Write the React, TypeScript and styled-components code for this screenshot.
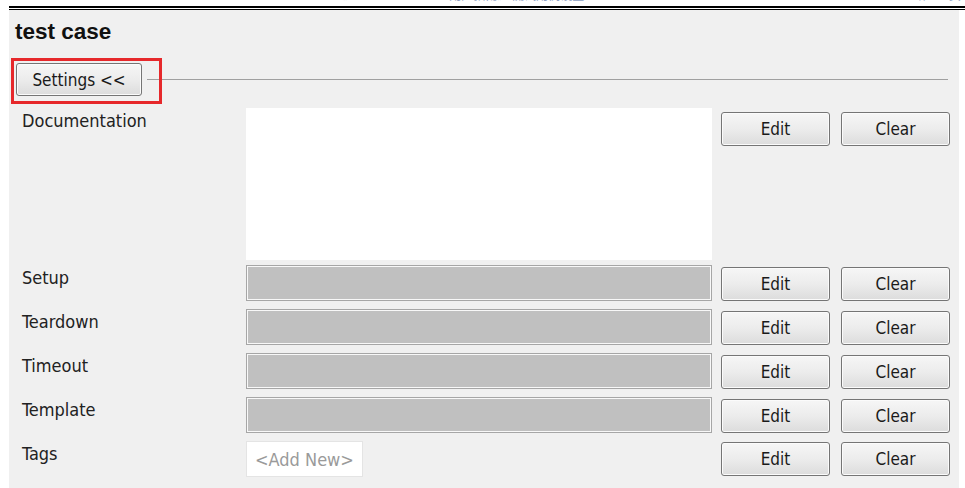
import React from "react";
import styled, { createGlobalStyle } from "styled-components";

const GlobalStyle = createGlobalStyle`
  body {
    margin: 0;
    background: #ffffff;
    font-family: "DejaVu Sans Condensed", "DejaVu Sans", sans-serif;
    color: #222222;
  }
`;

const Page = styled.div`
  width: 965px;
  height: 488px;
  overflow: hidden;
  background: #ffffff;
`;

const TopStrip = styled.div`
  height: 6px;
  overflow: hidden;
  display: flex;
  justify-content: space-between;
  padding: 0 4px 0 335px;
`;

const StripText = styled.span`
  display: block;
  margin-top: -12px;
  font-family: "Noto Sans CJK SC", sans-serif;
  font-size: 12px;
  line-height: 13px;
  color: #8a9cc0;
`;

const Rule = styled.div<{ $thick?: boolean }>`
  margin-left: 9px;
  height: ${(p) => (p.$thick ? "2px" : "1px")};
  margin-bottom: ${(p) => (p.$thick ? "1px" : "0")};
  background: #000000;
`;

const Panel = styled.div`
  margin-left: 9px;
  width: 950px;
  height: 478px;
  background: #f0f0f0;
  padding-top: 9px;
  box-sizing: border-box;
`;

const Title = styled.h1`
  margin: 0 0 0 6px;
  font-family: "Liberation Sans", Arial, sans-serif;
  font-weight: bold;
  font-size: 22.5px;
  line-height: 25px;
  color: #111111;
`;

const SettingsRow = styled.div`
  position: relative;
  display: flex;
  align-items: center;
  margin-top: 19px;
  padding-left: 7px;
  padding-right: 11px;
`;

const HighlightFrame = styled.div`
  position: absolute;
  left: 2px;
  top: -5px;
  width: 151px;
  height: 46px;
  border: 3px solid #e6282b;
  box-sizing: border-box;
  pointer-events: none;
`;

const Button = styled.button<{ $width?: number }>`
  width: ${(p) => p.$width ?? 109}px;
  height: 34px;
  padding: 0;
  border: 1px solid #757575;
  border-radius: 3px;
  background: linear-gradient(to bottom, #f6f6f6 0%, #ececec 50%, #dcdcdc 100%);
  box-shadow: inset 0 0 0 1px #fbfbfb;
  font-family: "DejaVu Sans Condensed", "DejaVu Sans", sans-serif;
  font-size: 17px;
  color: #1a1a1a;
  display: flex;
  align-items: center;
  justify-content: center;
  box-sizing: border-box;
`;

const Divider = styled.div`
  flex: 1;
  height: 1px;
  margin-left: 5px;
  background: #a0a0a0;
`;

const Rows = styled.div`
  margin-top: 12px;
  padding-left: 13px;
  display: flex;
  flex-direction: column;
  gap: 8px;
`;

const Row = styled.div<{ $height: number; $after?: number }>`
  display: grid;
  grid-template-columns: 224px 466px 118px 120px;
  height: ${(p) => p.$height}px;
  margin-bottom: ${(p) => (p.$after ? p.$after - 8 : 0)}px;
`;

const Label = styled.div`
  padding-top: 2px;
  font-size: 18px;
  line-height: 21px;
  color: #222222;
`;

const DocArea = styled.div`
  background: #ffffff;
`;

const Field = styled.div`
  border: 1px solid #a6a6a6;
  box-shadow: inset 0 0 0 1px #f8f8f8;
  background: #c0c0c0;
  box-sizing: border-box;
`;

const TagBox = styled.div`
  width: 117px;
  height: 36px;
  box-sizing: border-box;
  border: 1px solid #e4e4e4;
  background: #ffffff;
  padding-left: 8px;
  display: flex;
  align-items: center;
  font-size: 18px;
  color: #9a9a9a;
`;

const ActionCell = styled.div<{ $top: number }>`
  display: flex;
  justify-content: flex-end;
  padding-top: ${(p) => p.$top}px;
`;

const fields = ["Setup", "Teardown", "Timeout", "Template"];

const Actions: React.FC<{ top: number }> = ({ top }) => (
  <>
    <ActionCell $top={top}>
      <Button>Edit</Button>
    </ActionCell>
    <ActionCell $top={top}>
      <Button>Clear</Button>
    </ActionCell>
  </>
);

export default function App() {
  return (
    <Page>
      <GlobalStyle />
      <TopStrip>
        <StripText>《Robot Framework 用户指南》 测试用例设置</StripText>
        <StripText>第 12 页</StripText>
      </TopStrip>
      <Rule $thick />
      <Rule />
      <Panel>
        <Title>test case</Title>
        <SettingsRow>
          <Button $width={126} style={{ height: 33 }}>
            Settings &lt;&lt;
          </Button>
          <Divider />
          <HighlightFrame />
        </SettingsRow>
        <Rows>
          <Row $height={152} $after={5}>
            <Label>Documentation</Label>
            <DocArea />
            <Actions top={4} />
          </Row>
          {fields.map((name) => (
            <Row key={name} $height={36}>
              <Label>{name}</Label>
              <Field />
              <Actions top={2} />
            </Row>
          ))}
          <Row $height={36}>
            <Label>Tags</Label>
            <div>
              <TagBox>&lt;Add New&gt;</TagBox>
            </div>
            <Actions top={1} />
          </Row>
        </Rows>
      </Panel>
    </Page>
  );
}
